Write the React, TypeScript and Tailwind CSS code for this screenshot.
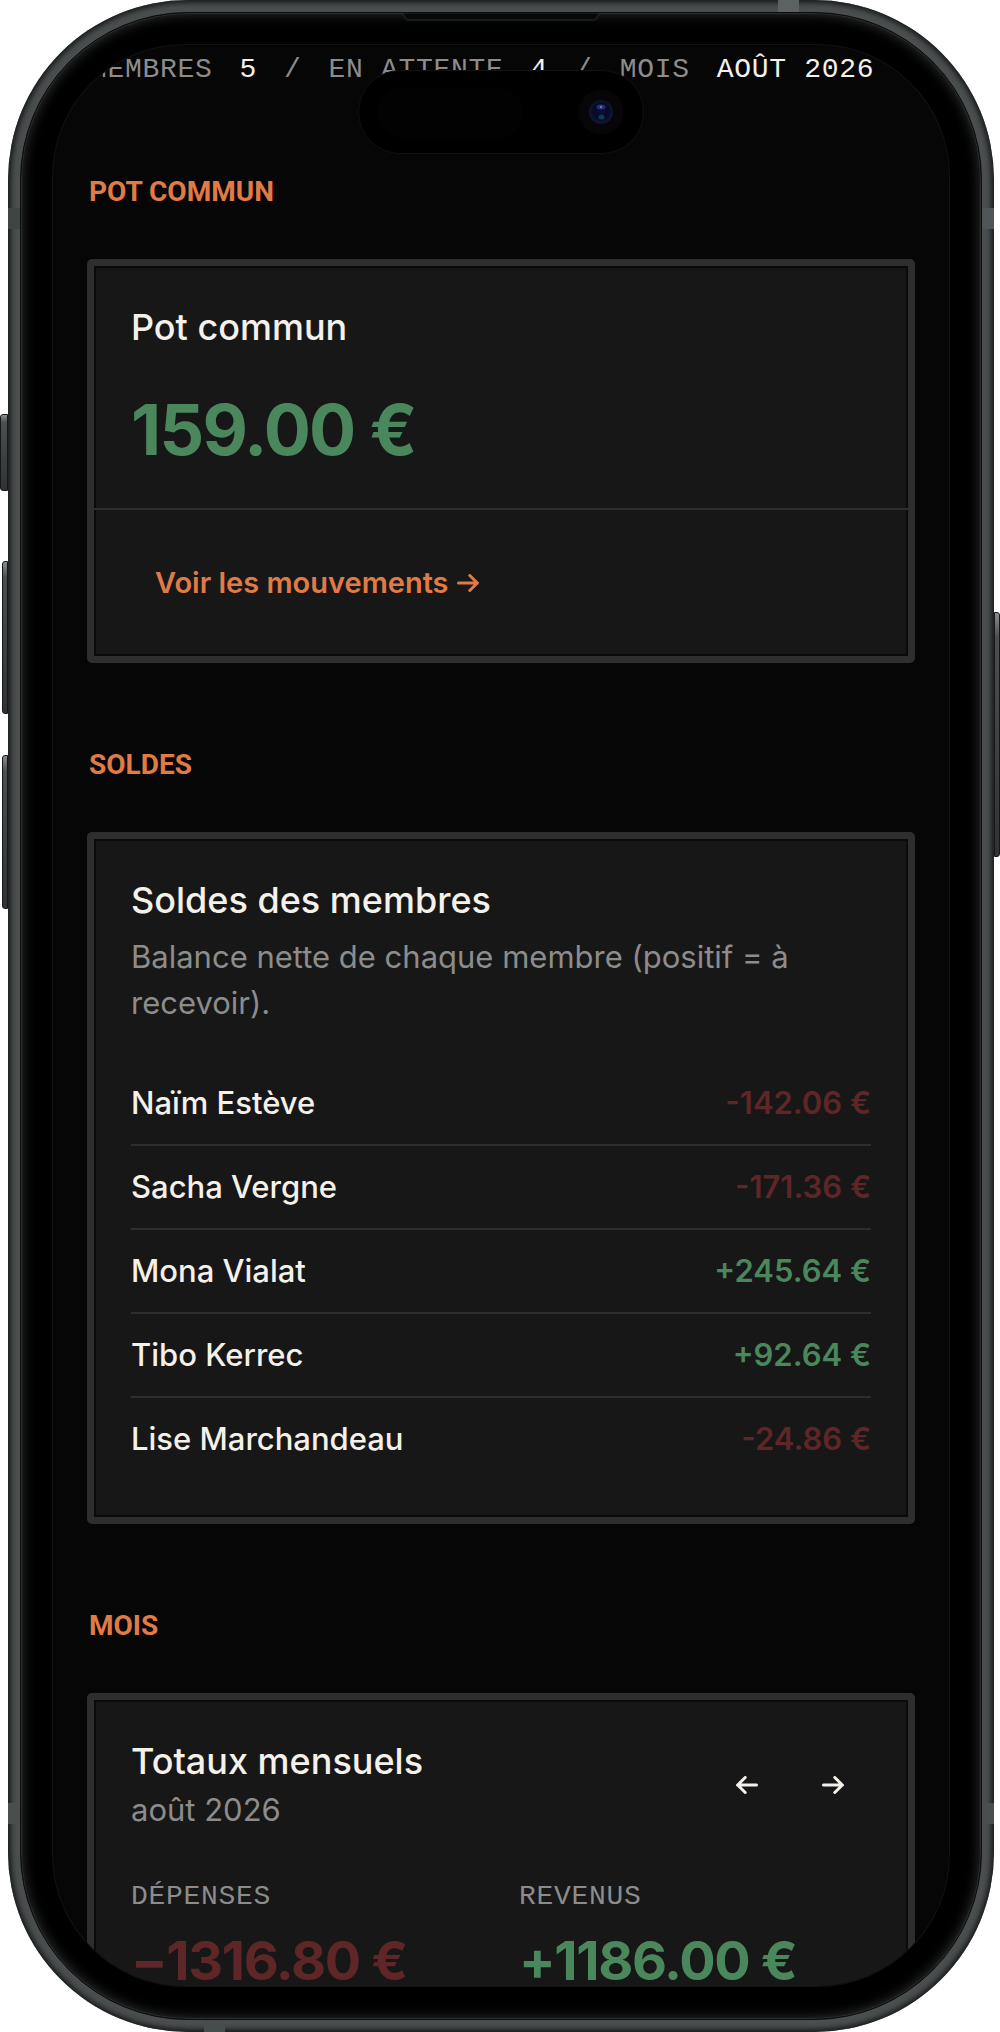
import { clsx } from 'clsx';
import { ReactNode } from 'react';

interface Member {
  name: string;
  balance: number;
}

const MEMBERS: Member[] = [
  { name: 'Naïm Estève', balance: -142.06 },
  { name: 'Sacha Vergne', balance: -171.36 },
  { name: 'Mona Vialat', balance: 245.64 },
  { name: 'Tibo Kerrec', balance: 92.64 },
  { name: 'Lise Marchandeau', balance: -24.86 },
];

function formatBalance(value: number) {
  return `${value > 0 ? '+' : ''}${value.toFixed(2)} €`;
}

export default function App() {
  return (
    <PhoneFrame>
      <div className="flex flex-col gap-[82px] px-[34px] pt-1">
        <StatusLine />
        <Section title="Pot commun">
          <PotCard />
        </Section>
        <Section title="Soldes">
          <BalancesCard />
        </Section>
        <Section title="Mois">
          <MonthCard />
        </Section>
      </div>
    </PhoneFrame>
  );
}

function StatusLine() {
  return (
    <div className="flex gap-[27px] pl-[3px] font-['Liberation_Mono',monospace] text-[28px]/[41px] tracking-wide whitespace-nowrap text-[#8c8c8c] uppercase">
      <span>Membres</span>
      <span className="text-[#f4f1ea]">5</span>
      <span>/</span>
      <span>En attente</span>
      <span className="text-[#f4f1ea]">4</span>
      <span>/</span>
      <span>Mois</span>
      <span className="text-[#f4f1ea]">août 2026</span>
    </div>
  );
}

function Section({ title, children }: { title: string; children: ReactNode }) {
  return (
    <section className="flex flex-col gap-[47px]">
      <h2 className="pl-0.5 font-['Roboto',sans-serif] text-[28px]/[40px] font-bold text-[#e07b46] uppercase">
        {title}
      </h2>
      {children}
    </section>
  );
}

function Card({ children }: { children: ReactNode }) {
  return (
    <div className="rounded-[5px] border-[7px] border-[#2e2e2e] bg-[#171717] shadow-[inset_0_0_0_2px_#0a0a0a]">
      {children}
    </div>
  );
}

function CardTitle({ children }: { children: ReactNode }) {
  return <h3 className="text-[36px]/[48px] font-medium text-[#f4f1ea]">{children}</h3>;
}

function PotCard() {
  return (
    <Card>
      <div className="flex flex-col gap-[37px] p-[37px]">
        <CardTitle>Pot commun</CardTitle>
        <p className="text-[70px]/[83px] font-bold tracking-tight text-[#4a875d]">159.00 €</p>
      </div>
      <div className="border-t-2 border-[#2e2e2e] p-[37px]">
        <a
          href="#mouvements"
          className="inline-flex h-[72px] items-center gap-2 px-6 text-[29px] font-semibold text-[#e07b46]"
        >
          Voir les mouvements
          <Arrow />
        </a>
      </div>
    </Card>
  );
}

function BalancesCard() {
  return (
    <Card>
      <div className="p-[37px]">
        <CardTitle>Soldes des membres</CardTitle>
        <p className="mt-2.5 text-[31px]/[46px] text-[#8c8c8c]">
          Balance nette de chaque membre (positif = à recevoir).
        </p>
        <ul className="mt-9">
          {MEMBERS.map((member) => (
            <li
              key={member.name}
              className="flex items-center justify-between border-b-2 border-[#2e2e2e] py-[18px] text-[31px]/[46px] last:border-b-0"
            >
              <span className="font-medium text-[#f4f1ea]">{member.name}</span>
              <span className={clsx('font-semibold', member.balance < 0 ? 'text-[#5f2628]' : 'text-[#4a875d]')}>
                {formatBalance(member.balance)}
              </span>
            </li>
          ))}
        </ul>
      </div>
    </Card>
  );
}

function MonthCard() {
  return (
    <Card>
      <div className="p-[37px]">
        <div className="flex items-center justify-between">
          <div>
            <CardTitle>Totaux mensuels</CardTitle>
            <p className="mt-0.5 text-[31px]/[46px] text-[#8c8c8c]">août 2026</p>
          </div>
          <div className="flex gap-[9px] text-[#f4f1ea]">
            <button type="button" aria-label="Mois précédent" className="grid h-[72px] w-[77px] place-items-center">
              <Arrow className="rotate-180" />
            </button>
            <button type="button" aria-label="Mois suivant" className="grid h-[72px] w-[77px] place-items-center">
              <Arrow />
            </button>
          </div>
        </div>
        <dl className="mt-11 grid grid-cols-2 gap-9">
          <Total label="Dépenses" value="−1316.80 €" className="text-[#5f2628]" />
          <Total label="Revenus" value="+1186.00 €" className="text-[#4a875d]" />
        </dl>
      </div>
    </Card>
  );
}

function Total({ label, value, className }: { label: string; value: string; className: string }) {
  return (
    <div>
      <dt className="font-['Liberation_Mono',monospace] text-[28px]/[40px] tracking-wide text-[#8c8c8c] uppercase">
        {label}
      </dt>
      <dd className={clsx('mt-3 text-[54px]/[64px] font-bold tracking-tight whitespace-nowrap', className)}>{value}</dd>
    </div>
  );
}

function Arrow({ className = '' }: { className?: string }) {
  return (
    <svg
      width="22"
      height="18"
      viewBox="0 0 22 18"
      fill="none"
      stroke="currentColor"
      strokeWidth="3"
      strokeLinecap="round"
      strokeLinejoin="round"
      className={className}
      aria-hidden="true"
    >
      <path d="M1.5 9h19M12.8 1.5L20.3 9l-7.5 7.5" />
    </svg>
  );
}

function PhoneFrame({ children }: { children: ReactNode }) {
  return (
    <div className="relative h-screen overflow-hidden bg-white pr-[6px] pl-2 font-['Inter',sans-serif]">
      <SideButton className="top-[414px] left-0 h-[77px] w-2 rounded-l-[3px]" />
      <SideButton className="top-[561px] left-0.5 h-[153px] w-1.5 rounded-l-[3px]" />
      <SideButton className="top-[755px] left-0.5 h-[154px] w-1.5 rounded-l-[3px]" />
      <SideButton className="top-[612px] right-0 h-[245px] w-1.5 rounded-r-[3px]" />

      <div className="relative h-full overflow-hidden rounded-[180px] bg-[#4a4e4e] p-3 shadow-[inset_0_0_5px_3px_#1a1d1e]">
        <span className="absolute top-[208px] left-0 h-[21px] w-3 bg-[#3f4445]" />
        <span className="absolute top-[208px] right-0 h-[21px] w-3 bg-[#505657]" />
        <span className="absolute bottom-[208px] left-0 h-[21px] w-3 bg-[#4b4e4e]" />
        <span className="absolute right-0 bottom-[208px] h-[21px] w-3 bg-[#4b4e4e]" />
        <span className="absolute top-0 right-[195px] h-3 w-[21px] bg-[#5c6162]" />
        <span className="absolute bottom-0 left-[196px] h-3 w-[21px] bg-[#474c4d]" />

        <div className="relative h-full rounded-[168px] border border-[#0c0d0d] bg-black px-8 pt-8 pb-[33px] shadow-[inset_0_0_0_1px_#2b2d2d,inset_0_0_12px_2px_#2a2c2c]">
          <svg
            className="absolute top-0 left-1/2 -translate-x-1/2"
            width="196"
            height="8"
            viewBox="0 0 196 8"
            aria-hidden="true"
          >
            <path d="M0 0.5l3 5.5q1 1 2 1h186q1 0 2-1l3-5.5" fill="#070808" stroke="#2a2c2c" />
          </svg>
          <div className="relative h-full overflow-hidden rounded-[132px] bg-[#060606] shadow-[0_0_0_1px_#121212]">
            {children}
            <DynamicIsland />
          </div>
        </div>
      </div>
    </div>
  );
}

function SideButton({ className }: { className: string }) {
  return (
    <span
      className={clsx(
        'absolute border border-[#151718] bg-linear-to-b from-[#8a8f90] via-[#4a4f50] via-10% to-[#2f3334]',
        className,
      )}
    />
  );
}

function DynamicIsland() {
  return (
    <div className="absolute top-[25px] left-1/2 flex h-[84px] w-[286px] -translate-x-1/2 items-center justify-between rounded-full border border-[#111] bg-black pr-[19px] pl-[18px]">
      <span className="h-[51px] w-[146px] rounded-full bg-[#020202]" />
      <svg width="46" height="46" viewBox="0 0 46 46" aria-hidden="true">
        <defs>
          <radialGradient id="lens" cx="50%" cy="45%" r="50%">
            <stop offset="0" stopColor="#0a0d3c" />
            <stop offset="0.6" stopColor="#070a26" />
            <stop offset="1" stopColor="#111530" />
          </radialGradient>
        </defs>
        <circle cx="23" cy="23" r="22.5" fill="#070508" />
        <circle cx="23" cy="23" r="12" fill="url(#lens)" />
        <ellipse cx="23" cy="18" rx="4.5" ry="2.5" fill="#282c78" />
        <circle cx="23" cy="18" r="1.2" fill="#6c70b4" />
        <ellipse cx="23.5" cy="28" rx="3" ry="2.5" fill="#0d3d4e" />
      </svg>
    </div>
  );
}
